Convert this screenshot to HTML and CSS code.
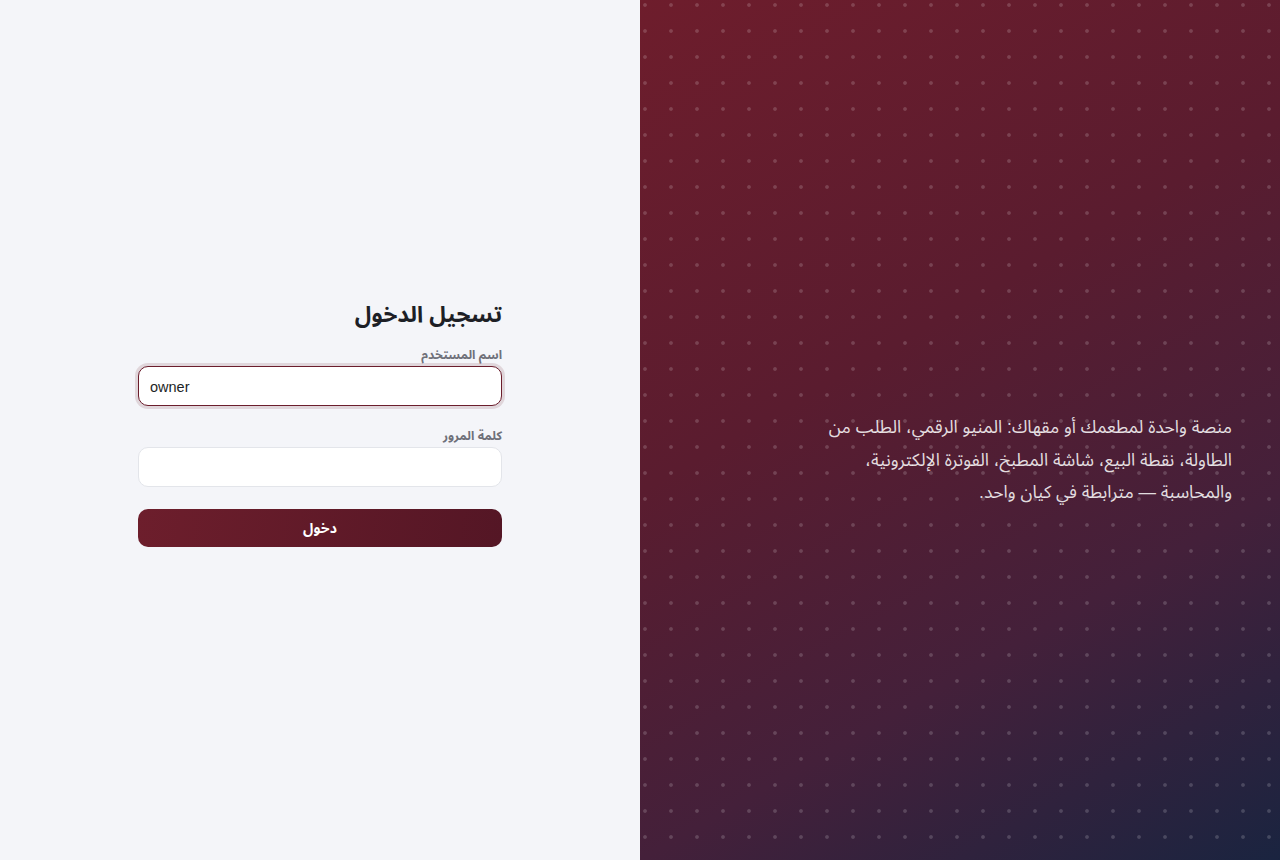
FILE: index.html
```html
<!DOCTYPE html>
<html lang="ar" dir="rtl">
<head>
<meta charset="utf-8">
<title>تسجيل الدخول</title>
<link rel="stylesheet" href="styles.css">
</head>
<body>
<main class="auth">
  <section class="brand">
    <p class="brand-text">منصة واحدة لمطعمك أو مقهاك: المنيو الرقمي، الطلب من الطاولة، نقطة البيع، شاشة المطبخ، الفوترة الإلكترونية، والمحاسبة — مترابطة في كيان واحد.</p>
  </section>
  <section class="form-side">
    <form class="login">
      <h1 class="title">تسجيل الدخول</h1>
      <div class="field">
        <label class="label" for="u">اسم المستخدم</label>
        <input class="input input-focus" id="u" type="text" value="owner" dir="ltr">
      </div>
      <div class="field">
        <label class="label" for="p">كلمة المرور</label>
        <input class="input" id="p" type="password">
      </div>
      <button class="btn" type="button">دخول</button>
    </form>
  </section>
</main>
</body>
</html>
```
FILE: styles.css
```css
* { box-sizing: border-box; }
html, body { margin: 0; padding: 0; height: 100%; }
body {
  font-family: "Liberation Sans", "Noto Sans Arabic", "Noto Sans", sans-serif;
  color: #1f2430;
  background: #f4f5f9;
}
.auth {
  display: grid;
  grid-template-columns: 1fr 1fr;
  height: 860px;
}
.brand {
  background-color: #5a1c2e;
  background-image:
    radial-gradient(circle at 5px 5px, rgba(255,255,255,0.17) 1.4px, transparent 2.3px),
    linear-gradient(150deg, #6e1d2c 0%, #5a1c2f 40%, #44203a 70%, #1a2440 100%);
  background-size: 26px 26px, 100% 100%;
  display: flex;
  align-items: center;
  padding: 60px 48px 0 48px;
}
.brand-text {
  margin: 0;
  max-width: 420px;
  color: rgba(255,255,255,0.86);
  font-size: 17.5px;
  line-height: 32.5px;
}
.form-side {
  display: flex;
  align-items: center;
  justify-content: center;
  padding-bottom: 14px;
}
.login {
  width: 364px;
  display: flex;
  flex-direction: column;
}
.title {
  margin: 0 0 15px;
  font-size: 22.5px;
  font-weight: 700;
  color: #1d1f26;
  line-height: 32px;
}
.field {
  display: flex;
  flex-direction: column;
  margin-bottom: 21px;
}
.label {
  font-size: 12.3px;
  font-weight: 700;
  color: #6f7079;
  padding-top: 1px;
  margin-bottom: 3px;
  line-height: 16px;
}
.input {
  height: 40px;
  border: 1px solid #e3e5ea;
  border-radius: 10px;
  background: #ffffff;
  padding: 1px 11px 0;
  font-family: "Liberation Sans", sans-serif;
  font-size: 14.5px;
  color: #1d1f26;
  outline: none;
}
.input-focus {
  border-color: #6b1d2c;
  box-shadow: 0 0 0 3px rgba(107,29,44,0.14);
}
.btn {
  height: 38px;
  margin-top: 1px;
  border: 0;
  border-radius: 10px;
  background: linear-gradient(100deg, #6d1e2c 0%, #541625 100%);
  color: #ffffff;
  font-family: inherit;
  font-size: 14px;
  font-weight: 700;
  cursor: pointer;
}
```
